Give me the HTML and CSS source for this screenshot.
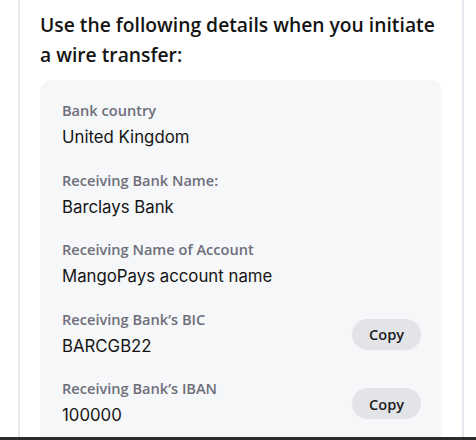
FILE: index.html
```html
<!DOCTYPE html>
<html lang="en">
<head>
<meta charset="UTF-8">
<meta name="viewport" content="width=device-width, initial-scale=1.0">
<title>Wire transfer details</title>
<link rel="stylesheet" href="styles.css">
</head>
<body>

<div class="panel">
    <h2 class="title">Use the following details when you initiate a wire transfer:</h2>
    <div class="details">
        <div class="row">
            <div class="info">
                <div class="label">Bank country</div>
                <div class="value">United Kingdom</div>
            </div>
        </div>
        <div class="row">
            <div class="info">
                <div class="label">Receiving Bank Name:</div>
                <div class="value">Barclays Bank</div>
            </div>
        </div>
        <div class="row">
            <div class="info">
                <div class="label">Receiving Name of Account</div>
                <div class="value">MangoPays account name</div>
            </div>
        </div>
        <div class="row">
            <div class="info">
                <div class="label">Receiving Bank’s BIC</div>
                <div class="value">BARCGB22</div>
            </div>
            <button class="btn-copy">Copy</button>
        </div>
        <div class="row">
            <div class="info">
                <div class="label">Receiving Bank’s IBAN</div>
                <div class="value">100000</div>
            </div>
            <button class="btn-copy">Copy</button>
        </div>
    </div>
</div>

</body>
</html>
```

FILE: styles.css
```css
body {
    font-family: "Open Sans", sans-serif;
    background-color: #fff;
    margin: 0;
    padding: 0;
    height: 440px;
    overflow: hidden;
    position: relative;
}

body::after {
    content: "";
    position: absolute;
    left: 0;
    right: 0;
    bottom: 0;
    height: 3px;
    background-color: #2b2b2e;
}

.panel {
    margin-left: 18px;
    width: 402px;
    height: 440px;
    padding: 10px 20px 0 20px;
    border-left: 2px solid #e6e6ee;
    border-right: 2px solid #e6e6ee;
}

.title {
    margin: 0 0 10px 0;
    font-size: 19.3px;
    font-weight: 600;
    line-height: 30px;
    color: #141414;
}

.details {
    background-color: #f6f7f9;
    border-radius: 12px;
    padding: 21px 21px 0 22px;
}

.row {
    display: flex;
    align-items: center;
    justify-content: space-between;
    height: 69.5px;
}

.info {
    align-self: flex-start;
}

.label {
    font-size: 14.6px;
    font-weight: 600;
    color: #6e6e7a;
    line-height: 18px;
}

.value {
    font-family: Inter, sans-serif;
    font-size: 16.8px;
    color: #141414;
    line-height: 20px;
    margin-top: 8px;
}

.btn-copy {
    font-family: "Open Sans", sans-serif;
    font-size: 14.6px;
    font-weight: 600;
    color: #1c1c1e;
    background-color: #e3e4e8;
    border: none;
    border-radius: 16px;
    width: 69px;
    height: 31px;
    margin-top: -20px;
}
```
